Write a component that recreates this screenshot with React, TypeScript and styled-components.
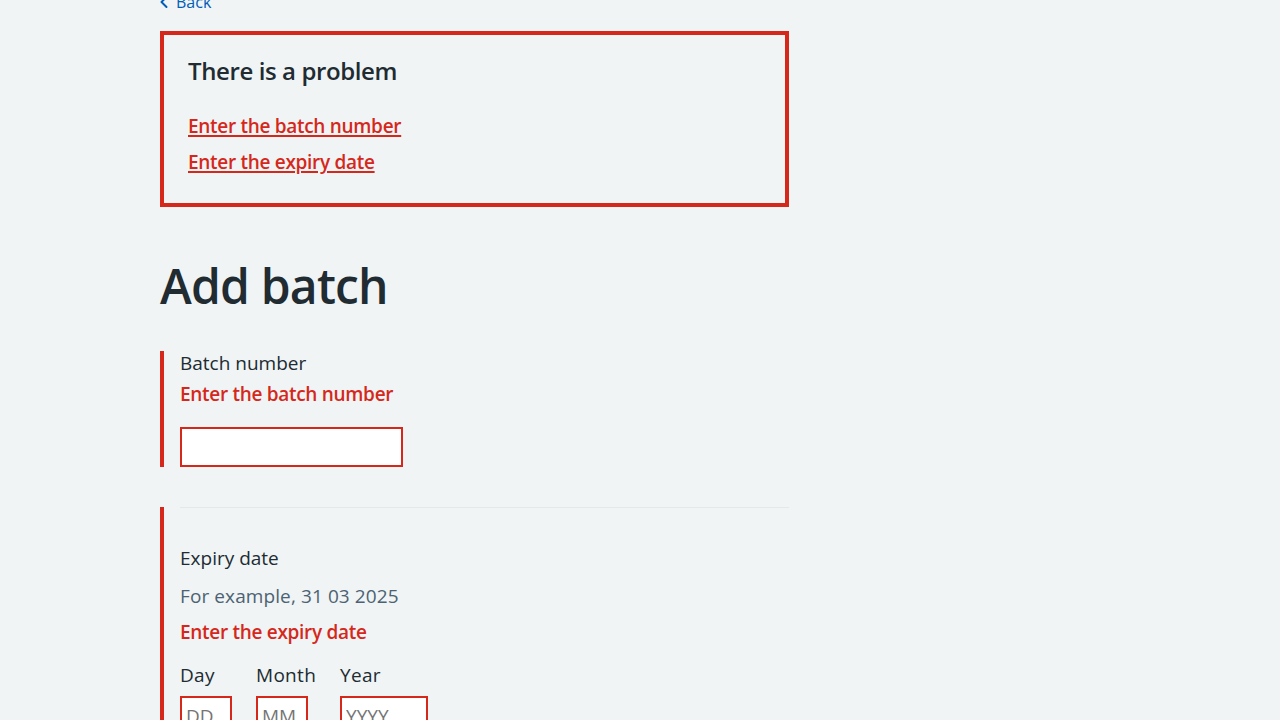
import React from "react";
import styled, { createGlobalStyle } from "styled-components";

const GlobalStyle = createGlobalStyle`
  html, body { margin: 0; padding: 0; }
  body {
    background: #f0f4f5;
    color: #212b32;
    font-family: "Open Sans", "Liberation Sans", Arial, sans-serif;
    -webkit-font-smoothing: antialiased;
  }
  * { box-sizing: border-box; }
`;

const red = "#d5281b";

const Container = styled.div`
  max-width: 960px;
  margin: 0 auto;
`;

const Column = styled.main`
  width: calc((100% + 32px) * 2 / 3 - 32px);
`;

const BackRow = styled.div`
  margin-top: -10px;
  margin-bottom: 17px;
  height: 24px;
`;

const BackLink = styled.a`
  display: inline-flex;
  align-items: center;
  color: #005eb8;
  font-size: 16px;
  line-height: 24px;
  text-decoration: none;
  svg {
    margin-left: -8px;
    fill: #005eb8;
  }
`;

const ErrorSummary = styled.div`
  border: 4px solid ${red};
  padding: 20px 24px 19px;
  margin-bottom: 51px;
`;

const SummaryTitle = styled.h2`
  margin: 0 0 25px;
  font-size: 24px;
  line-height: 32px;
  font-weight: 600;
  letter-spacing: -0.4px;
`;

const SummaryList = styled.ul`
  list-style: none;
  margin: 0;
  padding: 0;
`;

const SummaryItem = styled.li`
  margin: 0 0 8px;
  font-size: 19px;
  line-height: 28px;
`;

const SummaryLink = styled.a`
  color: ${red};
  font-weight: 600;
  letter-spacing: -0.3px;
  text-decoration: underline;
  text-underline-offset: 2px;
  text-decoration-thickness: 2px;
`;

const Title = styled.h1`
  margin: 0 0 37px;
  font-size: 48px;
  line-height: 56px;
  font-weight: 650;
  letter-spacing: -0.8px;
`;

const FormGroup = styled.div<{ $error?: boolean }>`
  border-left: 4px solid ${(p) => (p.$error ? red : "transparent")};
  padding-left: 16px;
  & + & {
    margin-top: 40px;
  }
`;

const Divider = styled.hr`
  border: 0;
  border-top: 1px solid #e3e8ea;
  margin: 0 0 38px;
`;

const Label = styled.label<{ $gap?: number }>`
  display: block;
  font-size: 19px;
  line-height: 24px;
  margin-bottom: ${(p) => p.$gap ?? 5}px;
`;

const Hint = styled.div`
  color: #4c6272;
  font-size: 19px;
  line-height: 28px;
  letter-spacing: 0.1px;
  margin-bottom: 8px;
`;

const ErrorMessage = styled.span<{ $gap: number }>`
  display: block;
  color: ${red};
  font-weight: 600;
  font-size: 19px;
  line-height: 28px;
  letter-spacing: -0.3px;
  margin-bottom: ${(p) => p.$gap}px;
`;

const Input = styled.input<{ $width: number }>`
  display: block;
  width: ${(p) => p.$width}px;
  height: 40px;
  border: 2px solid ${red};
  border-radius: 0;
  background: #ffffff;
  padding: 0 4px;
  font-family: inherit;
  font-size: 19px;
  color: #212b32;
  outline: none;
  &::placeholder {
    color: #757575;
  }
`;

const DateRow = styled.div`
  display: flex;
  align-items: flex-start;
`;

const DateItem = styled.div`
  margin-right: 24px;
`;

const DateLabel = styled.label`
  display: block;
  font-size: 19px;
  line-height: 24px;
  letter-spacing: 0.3px;
  margin-bottom: 9px;
`;

const Chevron = () => (
  <svg width="24" height="24" viewBox="0 0 24 24" aria-hidden="true">
    <path d="M8.5 12c0-.3.1-.5.3-.7l5-5c.4-.4 1-.4 1.4 0s.4 1 0 1.4L10.9 12l4.3 4.3c.4.4.4 1 0 1.4s-1 .4-1.4 0l-5-5c-.2-.2-.3-.4-.3-.7z" />
  </svg>
);

export default function App() {
  return (
    <>
      <GlobalStyle />
      <Container>
        <BackRow>
          <BackLink href="#">
            <Chevron />
            Back
          </BackLink>
        </BackRow>
        <Column>
          <ErrorSummary role="alert">
            <SummaryTitle>There is a problem</SummaryTitle>
            <SummaryList>
              <SummaryItem>
                <SummaryLink href="#batch">Enter the batch number</SummaryLink>
              </SummaryItem>
              <SummaryItem>
                <SummaryLink href="#expiry">Enter the expiry date</SummaryLink>
              </SummaryItem>
            </SummaryList>
          </ErrorSummary>

          <Title>Add batch</Title>

          <FormGroup $error>
            <Label htmlFor="batch">Batch number</Label>
            <ErrorMessage $gap={19}>Enter the batch number</ErrorMessage>
            <Input id="batch" $width={223} />
          </FormGroup>

          <FormGroup $error>
            <Divider />
            <Label $gap={12}>Expiry date</Label>
            <Hint>For example, 31 03 2025</Hint>
            <ErrorMessage $gap={17}>Enter the expiry date</ErrorMessage>
            <DateRow>
              <DateItem>
                <DateLabel htmlFor="day">Day</DateLabel>
                <Input id="day" $width={52} placeholder="DD" />
              </DateItem>
              <DateItem>
                <DateLabel htmlFor="month">Month</DateLabel>
                <Input id="month" $width={52} placeholder="MM" />
              </DateItem>
              <DateItem>
                <DateLabel htmlFor="year">Year</DateLabel>
                <Input id="year" $width={88} placeholder="YYYY" />
              </DateItem>
            </DateRow>
          </FormGroup>
        </Column>
      </Container>
    </>
  );
}
